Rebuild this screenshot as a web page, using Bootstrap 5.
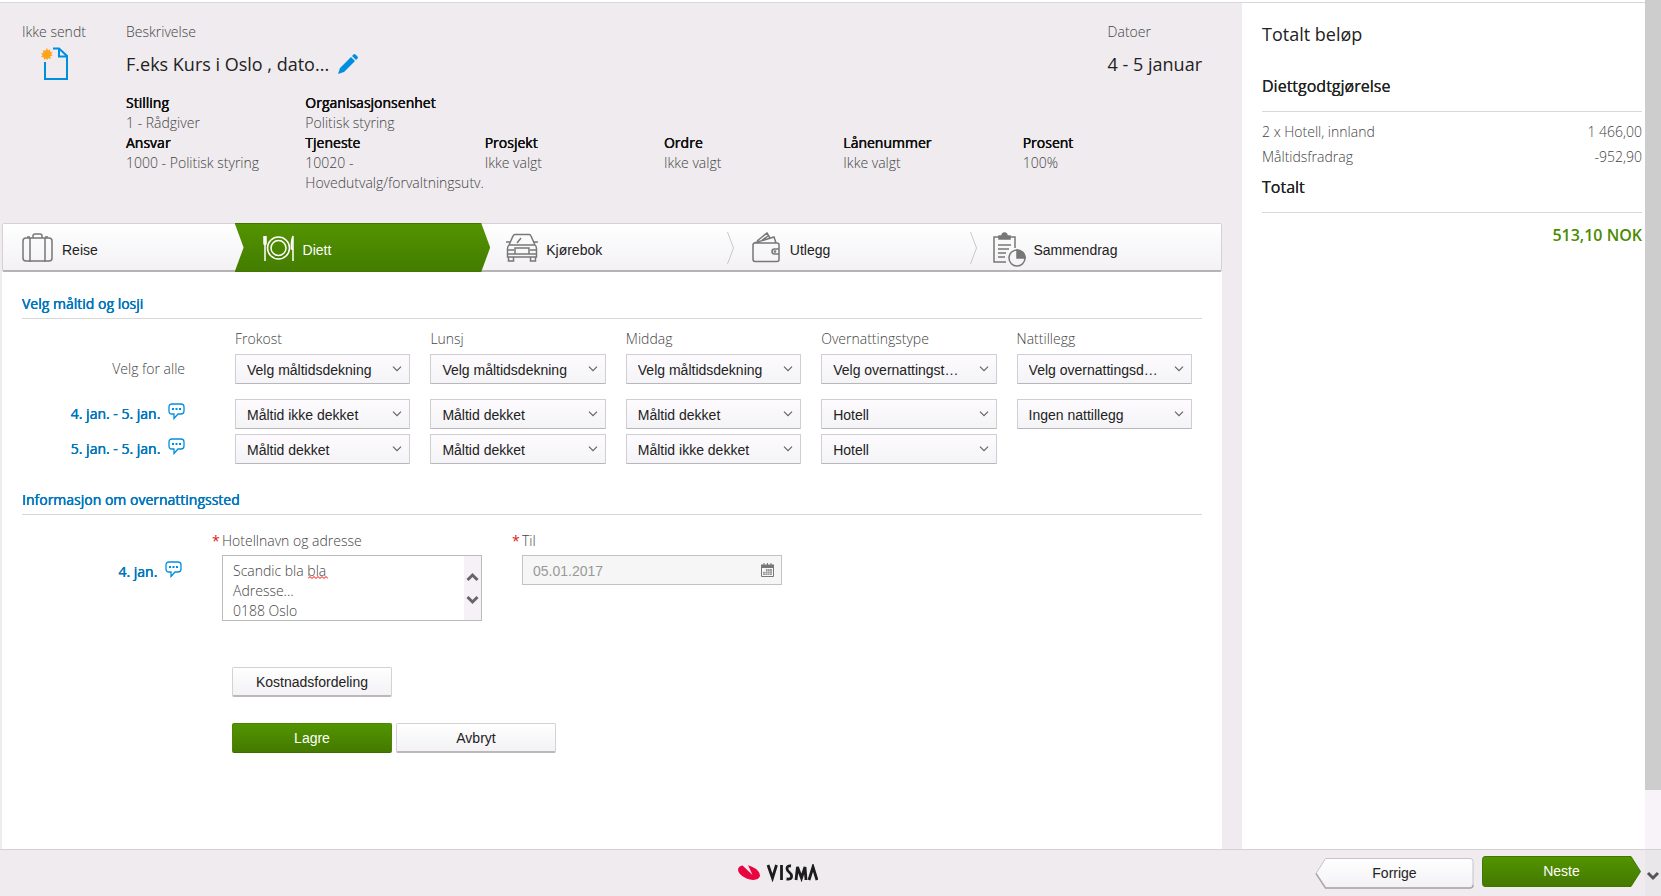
<!DOCTYPE html>
<html lang="no">
<head>
<meta charset="utf-8">
<meta name="viewport" content="width=device-width, initial-scale=1">
<title>Reiseregning</title>
<link rel="stylesheet" href="https://cdn.jsdelivr.net/npm/bootstrap@5.3.0/dist/css/bootstrap.min.css">
<style>
  :root { --ui: "Liberation Sans", Arial, sans-serif; --page: #efebef; --line: #d8d8d8; --blue: #0076bc; --cyan: #008fe0; }
  body { font-family: "Open Sans", sans-serif; font-size: 14px; line-height: 20px; font-weight: 300; color: #444; background: var(--page); }
  .frame { min-height: 100vh; }
  .topline { height: 3px; background: #fff; border-bottom: 1px solid #d9d7dc; }
  .head-area { padding: 19px 20px 30px 20px; }
  .status-col { width: 104px; flex: none; }
  .doc-icon { margin: 5px 0 0 18px; }
  .big-text { font-size: 18px; line-height: 28px; font-weight: 400; color: #222; }
  .fields { display: grid; grid-template-columns: repeat(6, minmax(0, 1fr)); white-space: nowrap; }
  .fields-top { margin-top: 15px; }
  .fields dt { font-weight: 400; color: #111; }
  .fields dt, .sec-title, .blue-link { text-shadow: 0 0 currentColor, 0 0 currentColor; }
  .side h3 { text-shadow: 0 0 currentColor; }
  .main-col { padding: 0 20px 0 2px; }
  .panel { background: #fff; }
  .steps { height: 49px; border: 1px solid #d3d1d5; border-bottom: 2px solid #b5b3b6; border-radius: 2px; background: linear-gradient(#fff, #f3f1f4); font-family: var(--ui); font-weight: 400; }
  .steps li { flex: 1 1 0; position: relative; }
  .steps a { display: flex; align-items: center; height: 46px; padding: 6px 0 0 16px; color: #222; text-decoration: none; }
  .steps li:first-child a { padding-left: 19px; }
  .steps svg.step-icon { width: 32px; height: 32px; margin: -4px 8px 0 0; flex: none; fill: none; stroke: #777; stroke-width: 1.5; }
  .steps .active-step a { color: #fff; }
  .steps .active-step svg.step-icon { stroke: #fff; }
  .steps .active-step > a { position: relative; }
  .arrow-bg { position: absolute; inset: -1px 0 -2px -12px; background: linear-gradient(#529400, #447c00); border-top: 1px solid #417600; border-bottom: 1px solid #417600; clip-path: polygon(0 0, calc(100% - 9px) 0, 100% 50%, calc(100% - 9px) 100%, 0 100%, 9px 50%); }
  .sep { position: absolute; right: 0; top: 8px; width: 7px; height: 32px; fill: none; stroke: #c9c7ca; }
  .body-area { padding: 22px 20px 0 20px; }
  .sec-title { font-size: 14px; line-height: 20px; font-weight: 400; color: var(--blue); padding-bottom: 4px; border-bottom: 1px solid var(--line); margin: 0; }
  .meals { display: grid; grid-template-columns: 193px repeat(5, minmax(0, 1fr)); column-gap: 20px; row-gap: 5px; padding: 10px 10px 0 0; align-items: center; }
  .row-label { text-align: right; padding-right: 30px; }
  .all-row { margin-bottom: 10px; }
  .blue-link { color: var(--blue); font-weight: 400; text-decoration: none; }
  .bubble { width: 17px; height: 17px; fill: none; stroke: var(--cyan); stroke-width: 1.3; margin: -8px 0 0 4px; }
  .form-select.ui-select { height: 30px; padding: 2px 30px 0 11px; font: 400 14px/20px var(--ui); color: #222; border: 1px solid #d0ced2; border-bottom-color: #b8b6ba; border-radius: 1px; background: url("data:image/svg+xml,%3Csvg xmlns='http://www.w3.org/2000/svg' width='10' height='6' fill='none' stroke='%23666' stroke-width='1.2'%3E%3Cpath d='M1 .7l4 4 4-4'/%3E%3C/svg%3E") no-repeat right 7px center, linear-gradient(#fdfbfe, #f4f3f5); }
  .sec-two { margin-top: 26px; }
  .lodging { padding-top: 16px; }
  .date-label { width: 160px; flex: none; text-align: right; padding-top: 31px; }
  .lodging-fields { gap: 40px; margin-left: 40px; }
  .field-box { width: 260px; }
  .field-box label { display: block; margin-left: -10px; margin-bottom: 4px; }
  .req { color: #e02020; font-weight: 400; display: inline-block; width: 10px; }
  .note-wrap { position: relative; }
  .form-control.note { height: 66px; resize: none; overflow: hidden; border: 1px solid #bbb; border-radius: 0; padding: 5px 24px 0 10px; font-size: 14px; line-height: 20px; font-weight: 300; color: #444; }
  .note-scroll { position: absolute; top: 1px; right: 1px; width: 17px; height: 64px; background: #f5f1f6; fill: none; stroke: #666; stroke-width: 3; }
  .squiggle { position: absolute; left: 86px; top: 21px; width: 20px; height: 3px; fill: none; stroke: #f00; }
  .form-control.date-in { height: 30px; border: 1px solid #c2c2c2; border-radius: 0; background: #f6f6f6; color: #999; font: 400 14px/20px var(--ui); padding: 2px 30px 0 10px; }
  .cal { position: absolute; right: 8px; top: 8px; width: 13px; height: 14px; }
  .ui-btn { height: 30px; width: 160px; padding: 0; font: 400 14px/20px var(--ui); color: #222; border: 1px solid #d3d1d4; border-bottom: 2px solid #bab8bb; border-radius: 2px; background: linear-gradient(#fff, #f3f1f4); }
  .ui-btn:hover { color: #222; }
  .ui-btn.go, .ui-btn.go:hover { color: #fff; background: linear-gradient(#529400, #447a00); border: 1px solid #4a8600; border-bottom: 1px solid #3d6c00; }
  .actions { padding: 46px 0 0 210px; }
  .save-row { margin-top: 26px; }
  .side { width: 403px; flex: none; background: #fff; padding: 17px 3px 0 20px; }
  .sum-title { font-size: 18px; line-height: 28px; font-weight: 400; color: #222; margin: 0 0 28px; }
  .side h3 { font-size: 16px; line-height: 20px; font-weight: 400; color: #222; margin: 0; }
  .side table { width: 100%; margin: 7px 0 8px; }
  .side td { padding: 0; height: 25px; }
  .side td + td { text-align: right; }
  .rule { padding-top: 15px; border-bottom: 1px solid var(--line); }
  .total { font-size: 16px; font-weight: 600; color: #4c8a00; text-align: right; margin-top: 12px; }
  .foot { height: 47px; border-top: 1px solid #d3d1d4; padding: 0 4px 0 240px; }
  .nav-btn { width: 159px; height: 31px; border: 0; padding: 0; background: none; position: relative; font: 400 14px/20px var(--ui); color: #222; }
  .nav-btn svg { position: absolute; inset: 0; width: 159px; height: 31px; }
  .nav-btn span { position: relative; }
  .scroll-col { width: 16px; flex: none; background: #f7f3f8; }
  .thumb { height: 88.2%; background: #cdcdcd; }
  .scroll-foot { height: 47px; background: #e9e7ea; border-top: 1px solid #d3d1d4; fill: none; stroke: #555; stroke-width: 3; }
</style>
</head>
<body>
<div class="frame d-flex">
  <div class="d-flex flex-column flex-grow-1">
    <div class="topline"></div>
    <div class="d-flex flex-grow-1">
      <main class="main-col flex-grow-1 d-flex flex-column">
        <header class="head-area d-flex">
          <div class="status-col">
            <div>Ikke sendt</div>
            <svg class="doc-icon" width="30" height="34" viewBox="0 0 30 34" aria-hidden="true"><path d="M5 15v17h22V9l-8-7.500h-6M19 1.500v8h8" fill="none" stroke="#008fe0" stroke-width="2"/><path d="M7 1l1 2.500 2.300-1.200-.3 2.500 2.500.2-1.500 2 1.700 1.500-2.500.8.7 2.500-2.500-.6L7.500 13 6 11.500 4 12.800l-.4-2.500-2.500-.2 1.500-2L1 6.500l2.500-.7-.6-2.500 2.500.5z" fill="#ffa31a"/></svg>
          </div>
          <div class="flex-grow-1">
            <div class="d-flex justify-content-between">
              <div>
                <div class="mb-2">Beskrivelse</div>
                <div class="big-text d-flex align-items-center">F.eks Kurs i Oslo , dato...
                  <svg class="ms-2" width="22" height="22" viewBox="0 0 22 22" fill="#008fe0" aria-label="Rediger"><path d="M1 21l2-6L14 4l4 4L7 19zM15 3l1.500-1.500q1-1 2 0l2 2q1 1 0 2L19 7z"/></svg>
                </div>
              </div>
              <div>
                <div class="mb-2">Datoer</div>
                <div class="big-text">4 - 5 januar</div>
              </div>
            </div>
            <div class="fields fields-top">
              <dl class="m-0"><dt>Stilling</dt><dd class="m-0">1 - Rådgiver</dd></dl>
              <dl class="m-0"><dt>Organisasjonsenhet</dt><dd class="m-0">Politisk styring</dd></dl>
            </div>
            <div class="fields">
              <dl class="m-0"><dt>Ansvar</dt><dd class="m-0">1000 - Politisk styring</dd></dl>
              <dl class="m-0"><dt>Tjeneste</dt><dd class="m-0">10020 -<br>Hovedutvalg/forvaltningsutv.</dd></dl>
              <dl class="m-0"><dt>Prosjekt</dt><dd class="m-0">Ikke valgt</dd></dl>
              <dl class="m-0"><dt>Ordre</dt><dd class="m-0">Ikke valgt</dd></dl>
              <dl class="m-0"><dt>Lånenummer</dt><dd class="m-0">Ikke valgt</dd></dl>
              <dl class="m-0"><dt>Prosent</dt><dd class="m-0">100%</dd></dl>
            </div>
          </div>
        </header>

        <div class="panel flex-grow-1">
          <ol class="steps list-unstyled d-flex m-0">
            <li><a href="#"><svg class="step-icon" viewBox="0 0 32 32"><rect x="1" y="6" width="29" height="23" rx="3"/><path d="M8 6v24M23 6v24M11 6V4q0-2 2-2h5q2 0 2 2v2M5 5h3M23 5h3"/></svg>Reise</a></li>
            <li class="active-step"><div class="arrow-bg"></div><a href="#"><svg class="step-icon" viewBox="0 0 32 32"><circle cx="15.500" cy="16" r="11"/><circle cx="15.500" cy="16" r="7.500"/><path d="M1 4v7q0 2 1 2t1-2V4M2 4v25M30 29V4q-2 4-1.500 13H30"/></svg>Diett</a></li>
            <li><a href="#"><svg class="step-icon" viewBox="0 0 32 32"><path d="M3 13L7 4q.5-1.500 2-1.500h14q1.500 0 2 1.500l4 9M3 13h26q1.500 1 1.500 4v8h-29v-8q0-3 1.500-4zM0 10h4M28 10h4M2 18h6M24 18h6M9 16h14v6H9zM2 22h7M23 22h7M2.500 25v4h5v-4M24.500 25v4h5v-4M11 11l4-5"/></svg>Kjørebok</a><svg class="sep" viewBox="0 0 7 32"><path d="M.5 0l6 16-6 16"/></svg></li>
            <li><a href="#"><svg class="step-icon" viewBox="0 0 32 32"><path d="M29 17v-4q0-2-2-2H5q-2 0-2 2v14q0 2.500 2 2.500h22q2 0 2-2v-5M29 17h-4.500q-2.500 0-2.500 2.500t2.500 2.500H29zM4 11L24 5l2 6M7 9l10-8 3 5M11 9l7-5"/><circle cx="25" cy="19.500" r=".6"/></svg>Utlegg</a><svg class="sep" viewBox="0 0 7 32"><path d="M.5 0l6 16-6 16"/></svg></li>
            <li><a href="#"><svg class="step-icon" viewBox="0 0 32 32" overflow="visible"><path d="M13 30H1V5h5M17 5h5v11"/><path d="M6 7V4h3q0-3 2.500-3T14 4h3v3z" fill="#777"/><path d="M5 13h13M5 17h11M5 21h8M5 25h7"/><circle cx="24" cy="26" r="8"/><path d="M24 26v-8a8 8 0 0 1 8 8z" fill="#777"/></svg>Sammendrag</a></li>
          </ol>

          <div class="body-area">
            <h2 class="sec-title">Velg måltid og losji</h2>
            <div class="meals">
              <div></div><div>Frokost</div><div>Lunsj</div><div>Middag</div><div>Overnattingstype</div><div>Nattillegg</div>

              <div class="row-label all-row">Velg for alle</div>
              <select class="form-select ui-select all-row" aria-label="Frokost, alle"><option>Velg måltidsdekning</option></select>
              <select class="form-select ui-select all-row" aria-label="Lunsj, alle"><option>Velg måltidsdekning</option></select>
              <select class="form-select ui-select all-row" aria-label="Middag, alle"><option>Velg måltidsdekning</option></select>
              <select class="form-select ui-select all-row" aria-label="Overnattingstype, alle"><option>Velg overnattingst…</option></select>
              <select class="form-select ui-select all-row" aria-label="Nattillegg, alle"><option>Velg overnattingsd…</option></select>

              <div class="row-label"><a class="blue-link" href="#">4. jan. - 5. jan. <svg class="bubble" viewBox="0 0 17 17"><path d="M4 1h9q3 0 3 3v4q0 3-3 3h-3l-4 4.500V11H4q-3 0-3-3V4q0-3 3-3z"/><path d="M4 6h2M7.500 6h2M11 6h2" stroke-width="2"/></svg></a></div>
              <select class="form-select ui-select" aria-label="Frokost 4. jan."><option>Måltid ikke dekket</option></select>
              <select class="form-select ui-select" aria-label="Lunsj 4. jan."><option>Måltid dekket</option></select>
              <select class="form-select ui-select" aria-label="Middag 4. jan."><option>Måltid dekket</option></select>
              <select class="form-select ui-select" aria-label="Overnattingstype 4. jan."><option>Hotell</option></select>
              <select class="form-select ui-select" aria-label="Nattillegg 4. jan."><option>Ingen nattillegg</option></select>

              <div class="row-label"><a class="blue-link" href="#">5. jan. - 5. jan. <svg class="bubble" viewBox="0 0 17 17"><path d="M4 1h9q3 0 3 3v4q0 3-3 3h-3l-4 4.500V11H4q-3 0-3-3V4q0-3 3-3z"/><path d="M4 6h2M7.500 6h2M11 6h2" stroke-width="2"/></svg></a></div>
              <select class="form-select ui-select" aria-label="Frokost 5. jan."><option>Måltid dekket</option></select>
              <select class="form-select ui-select" aria-label="Lunsj 5. jan."><option>Måltid dekket</option></select>
              <select class="form-select ui-select" aria-label="Middag 5. jan."><option>Måltid ikke dekket</option></select>
              <select class="form-select ui-select" aria-label="Overnattingstype 5. jan."><option>Hotell</option></select>
            </div>

            <h2 class="sec-title sec-two">Informasjon om overnattingssted</h2>
            <div class="lodging d-flex">
              <div class="date-label"><a class="blue-link" href="#">4. jan. <svg class="bubble" viewBox="0 0 17 17"><path d="M4 1h9q3 0 3 3v4q0 3-3 3h-3l-4 4.500V11H4q-3 0-3-3V4q0-3 3-3z"/><path d="M4 6h2M7.500 6h2M11 6h2" stroke-width="2"/></svg></a></div>
              <div class="lodging-fields d-flex">
                <div class="field-box">
                  <label for="hotel"><span class="req">*</span>Hotellnavn og adresse</label>
                  <div class="note-wrap">
                    <textarea id="hotel" class="form-control note" spellcheck="false">Scandic bla bla
Adresse...
0188 Oslo</textarea>
                    <svg class="squiggle" viewBox="0 0 20 3"><path d="M0 2.500l2-2 2 2 2-2 2 2 2-2 2 2 2-2 2 2 2-2 2 2"/></svg>
                    <svg class="note-scroll" viewBox="0 0 17 64"><path d="M3.500 24L8.500 19l5 5M3.500 41l5 5 5-5"/></svg>
                  </div>
                </div>
                <div class="field-box">
                  <label for="til"><span class="req">*</span>Til</label>
                  <div class="note-wrap">
                    <input id="til" class="form-control date-in" value="05.01.2017" disabled>
                    <svg class="cal" viewBox="0 0 13 14"><path d="M0 1.500h13V5H0z" fill="#777"/><path d="M.5 4v9.500h12V4M3 0v3M6.500 0v3M10 0v3" fill="none" stroke="#777"/><path d="M5 6h6v6H2V9h3z" fill="#999"/><path d="M2 8.500h9M2 10.500h9M4.500 6v6M6.500 6v6M8.500 6v6" stroke="#ddd" stroke-width=".5"/></svg>
                  </div>
                </div>
              </div>
            </div>

            <div class="actions">
              <button class="btn ui-btn" type="button">Kostnadsfordeling</button>
              <div class="save-row d-flex gap-1">
                <button class="btn ui-btn go" type="button">Lagre</button>
                <button class="btn ui-btn" type="button">Avbryt</button>
              </div>
            </div>
          </div>
        </div>
      </main>

      <aside class="side">
        <h2 class="sum-title">Totalt beløp</h2>
        <h3>Diettgodtgjørelse</h3>
        <div class="rule"></div>
        <table>
          <tr><td>2 x Hotell, innland</td><td>1 466,00</td></tr>
          <tr><td>Måltidsfradrag</td><td>-952,90</td></tr>
        </table>
        <h3>Totalt</h3>
        <div class="rule"></div>
        <div class="total">513,10 NOK</div>
      </aside>
    </div>

    <footer class="foot d-flex align-items-center">
      <div class="flex-grow-1 d-flex justify-content-center">
        <svg width="80" height="18" viewBox="0 0 80 18" role="img" aria-label="Visma"><ellipse cx="11" cy="8.500" rx="11.500" ry="6.500" transform="rotate(22 11 8.500)" fill="#e8053f"/><path d="M3 0L14.500 11 9.500 0z" fill="#efebef"/><g fill="none" stroke="#1c1c1f" stroke-width="3.400"><path d="M30 1l4.500 13L38.500 1M43.500 1v15M53 2q-4-.5-4 2.500 0 2 2.500 4t2 4.500q-.5 2.500-5 2M58 16l1.500-13 4 11 3.500-11L68 16M71 16l4-13 4 13" stroke-width="2.800"/></g></svg>
      </div>
      <button class="nav-btn" type="button"><svg viewBox="0 0 159 31"><defs><linearGradient id="w" x2="0" y2="1"><stop stop-color="#fff"/><stop offset="1" stop-color="#f3f1f4"/></linearGradient><linearGradient id="g" x2="0" y2="1"><stop stop-color="#529400"/><stop offset="1" stop-color="#447800"/></linearGradient></defs><path d="M10.500.5H155q3 0 3 3V27q0 3-3 3H10.500L1 15.500z" fill="url(#w)" stroke="#c6c4c8"/><path d="M1 15.500L10.500 30H155q3 0 3-3" fill="none" stroke="#aaa8ac" stroke-width="1.500"/></svg><span>Forrige</span></button>
      <button class="nav-btn text-white ms-2 mb-1" type="button"><svg viewBox="0 0 159 31"><path d="M3 .5h146l9.500 15-9.500 15H3q-2.500 0-2.500-3V3.500q0-3 2.500-3z" fill="url(#g)" stroke="#427600"/></svg><span>Neste</span></button>
    </footer>
  </div>
  <div class="scroll-col d-flex flex-column" aria-hidden="true">
    <div class="thumb"></div>
    <div class="flex-grow-1"></div>
    <div class="scroll-foot"><svg width="16" height="46" viewBox="0 0 16 46"><path d="M3 23l5 5 5-5"/></svg></div>
  </div>
</div>
<script src="https://cdn.jsdelivr.net/npm/bootstrap@5.3.0/dist/js/bootstrap.bundle.min.js"></script>
</body>
</html>
